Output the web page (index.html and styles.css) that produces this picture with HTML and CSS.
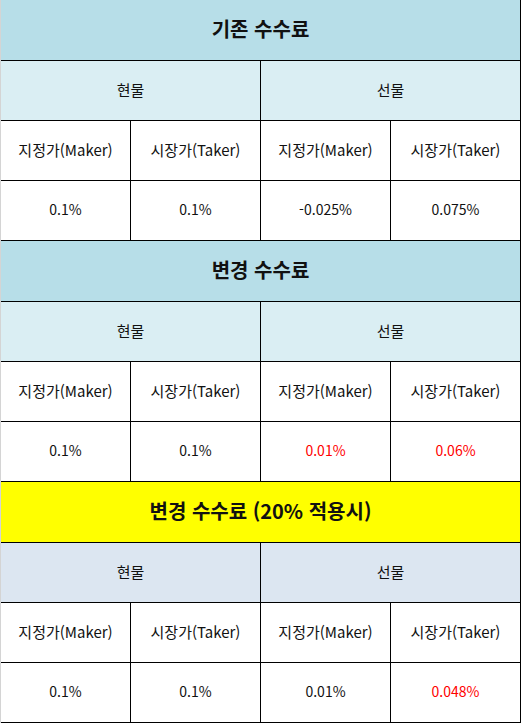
FILE: index.html
```html
<!DOCTYPE html>
<html lang="ko">
<head>
    <meta charset="UTF-8">
    <meta name="viewport" content="width=device-width, initial-scale=1.0">
    <title>수수료 변경 안내</title>
    <link rel="stylesheet" href="styles.css">
</head>
<body>
    <div class="fee-table">
        <div class="cell title">기존 수수료</div>
        <div class="cell group">현물</div>
        <div class="cell group">선물</div>
        <div class="cell label">지정가(Maker)</div>
        <div class="cell label">시장가(Taker)</div>
        <div class="cell label">지정가(Maker)</div>
        <div class="cell label">시장가(Taker)</div>
        <div class="cell">0.1%</div>
        <div class="cell">0.1%</div>
        <div class="cell">-0.025%</div>
        <div class="cell">0.075%</div>

        <div class="cell title">변경 수수료</div>
        <div class="cell group">현물</div>
        <div class="cell group">선물</div>
        <div class="cell label">지정가(Maker)</div>
        <div class="cell label">시장가(Taker)</div>
        <div class="cell label">지정가(Maker)</div>
        <div class="cell label">시장가(Taker)</div>
        <div class="cell">0.1%</div>
        <div class="cell">0.1%</div>
        <div class="cell red">0.01%</div>
        <div class="cell red">0.06%</div>

        <div class="cell title title-yellow">변경 수수료 (20% 적용시)</div>
        <div class="cell group group-blue">현물</div>
        <div class="cell group group-blue">선물</div>
        <div class="cell label">지정가(Maker)</div>
        <div class="cell label">시장가(Taker)</div>
        <div class="cell label">지정가(Maker)</div>
        <div class="cell label">시장가(Taker)</div>
        <div class="cell">0.1%</div>
        <div class="cell">0.1%</div>
        <div class="cell">0.01%</div>
        <div class="cell red">0.048%</div>
    </div>
</body>
</html>
```

FILE: styles.css
```css
* {
    margin: 0;
    padding: 0;
    box-sizing: border-box;
}

body {
    background: #fff;
    font-family: "Noto Sans CJK KR", "Noto Sans", sans-serif;
    color: #111;
}

.fee-table {
    width: 521px;
    display: grid;
    grid-template-columns: repeat(4, 130px);
    grid-template-rows: 61px 60px 60px 60px 61px 60px 60px 60px 61px 60px 60px 60px;
    border-left: 1px solid #d4d4d4;
}

.cell {
    display: flex;
    align-items: center;
    justify-content: center;
    padding-bottom: 3px;
    border-right: 1px solid #000;
    border-bottom: 1px solid #000;
    font-size: 14px;
    background: #fff;
}

.label {
    font-size: 15px;
}

.title {
    grid-column: span 4;
    background: #b7dee8;
    font-size: 20px;
    font-weight: bold;
    padding-bottom: 4px;
}

.title-yellow {
    background: #ffff00;
}

.group {
    grid-column: span 2;
    background: #daeef3;
    font-size: 15px;
}

.group-blue {
    background: #dce6f1;
}

.red {
    color: #ff0000;
}
```
